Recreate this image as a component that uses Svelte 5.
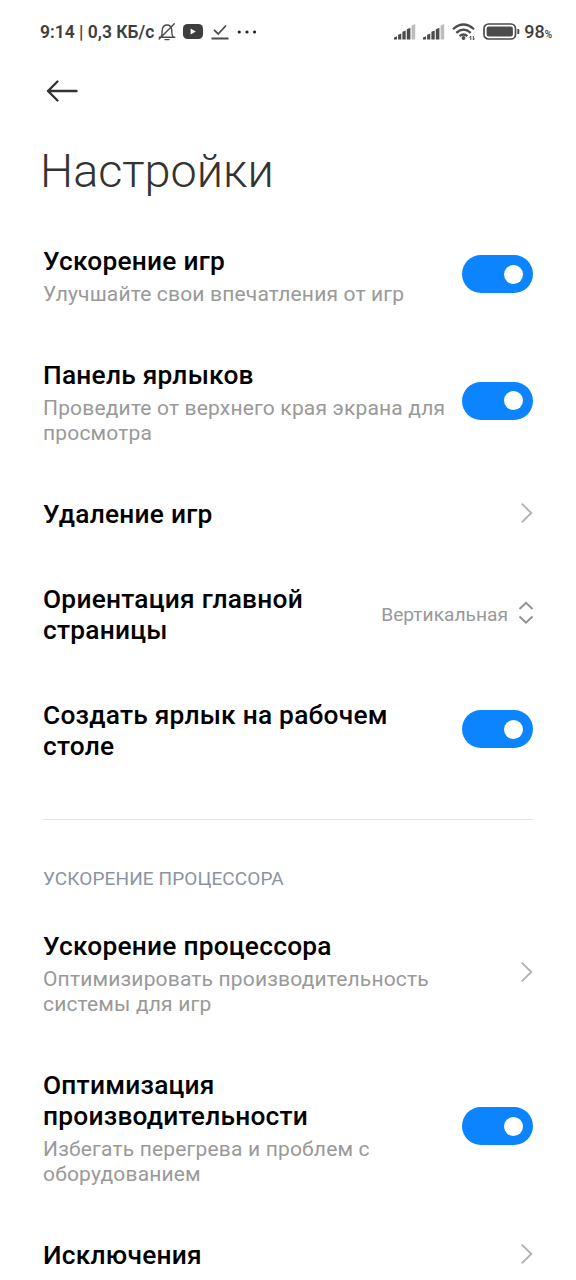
<script lang="ts">
	type Item = {
		title: string;
		summary?: string;
		kind: 'switch' | 'link' | 'select';
		value?: string;
		on?: boolean;
	};

	let general: Item[] = $state([
		{
			title: 'Ускорение игр',
			summary: 'Улучшайте свои впечатления от игр',
			kind: 'switch',
			on: true
		},
		{
			title: 'Панель ярлыков',
			summary: 'Проведите от верхнего края экрана для просмотра',
			kind: 'switch',
			on: true
		},
		{ title: 'Удаление игр', kind: 'link' },
		{ title: 'Ориентация главной страницы', kind: 'select', value: 'Вертикальная' },
		{ title: 'Создать ярлык на рабочем столе', kind: 'switch', on: true }
	]);

	let processor: Item[] = $state([
		{
			title: 'Ускорение процессора',
			summary: 'Оптимизировать производительность системы для игр',
			kind: 'link'
		},
		{
			title: 'Оптимизация производительности',
			summary: 'Избегать перегрева и проблем с оборудованием',
			kind: 'switch',
			on: true
		},
		{ title: 'Исключения', kind: 'link' }
	]);
</script>

{#snippet signal()}
	<svg class="signal" width="22" height="16" viewBox="0 0 22 16">
		<path
			d="M0 15.5v-2l3-1.3v3.3zM4.1 15.5v-4.8l3.2-1.2v6zM8.4 15.5V7.8l3.3-1.2v8.9zM12.8 15.5V5.2l3.6-1.5v11.8z"
			fill="#4b4b4b"
		/>
		<path d="M17.6 15.5V1.4L21.2 0v15.5z" fill="#bdbdbd" />
	</svg>
{/snippet}

{#snippet row(item: Item)}
	<li class="row">
		<div class="text">
			<div class="title">{item.title}</div>
			{#if item.summary}
				<div class="summary">{item.summary}</div>
			{/if}
		</div>
		{#if item.kind === 'switch'}
			<button
				class="switch"
				class:on={item.on}
				role="switch"
				aria-checked={item.on}
				aria-label={item.title}
				onclick={() => (item.on = !item.on)}
			></button>
		{:else if item.kind === 'select'}
			<span class="value">{item.value}</span>
			<svg class="updown" width="16" height="24" viewBox="0 0 16 24">
				<path d="M1.5 8 8 1.8 14.5 8M1.5 15.5 8 21.7l6.5-6.2" />
			</svg>
		{:else}
			<svg class="chevron" width="13" height="22" viewBox="0 0 13 22">
				<path d="M1.8 1.7 11.3 11l-9.5 9.3" />
			</svg>
		{/if}
	</li>
{/snippet}

<div class="screen">
	<div class="status">
		<span class="clock">9:14 | 0,3 КБ/с</span>
		<svg class="bell" width="18" height="18" viewBox="0 0 18 18">
			<path
				d="M1.2 14.2h15.6M3 13.8C4.4 12.2 4 10 4.2 7.2 4.5 4 6.4 2 9 2s4.5 2 4.8 5.2c.2 2.8-.2 5 1.2 6.6M7 16.6h4M16.3.8 1.2 16"
			/>
		</svg>
		<svg class="video" width="20" height="15" viewBox="0 0 20 15">
			<rect width="20" height="15" rx="4.5" fill="#3e3e3e" />
			<path d="M7.6 4.5v6l5.2-3z" fill="#fff" />
		</svg>
		<svg class="done" width="18" height="16" viewBox="0 0 18 16">
			<path d="M3 5.8 7.2 10 15 1.5M.5 14.5h17" />
		</svg>
		<svg class="dots" width="20" height="4" viewBox="0 0 20 4">
			<circle cx="2.2" cy="2" r="1.6" />
			<circle cx="10" cy="2" r="1.6" />
			<circle cx="17.6" cy="2" r="1.6" />
		</svg>
		<div class="right">
			{@render signal()}
			{@render signal()}
			<svg class="wifi" width="24" height="18" viewBox="0 0 24 18">
				<path d="M1 6.2Q11.5-3.2 22 6.2M4.3 9.8q7.2-6.2 14.4 0M7.6 13.1q3.9-3.2 7.8 0" />
				<circle cx="11.5" cy="15" r="1.9" />
				<path class="traffic" d="M18.8 17v-4l-1.3 1.5M21.3 13v4l1.3-1.5" />
			</svg>
			<svg class="battery" width="37" height="17" viewBox="0 0 37 17">
				<rect x="1" y="1" width="31.5" height="15" rx="4.5" fill="none" stroke="#4b4b4b" stroke-width="1.7" />
				<rect x="3.6" y="3.6" width="26.3" height="9.8" rx="2.2" fill="#4b4b4b" />
				<path d="M34.3 6h1.2q.8 0 .8.8v3.4q0 .8-.8.8h-1.2z" fill="#4b4b4b" />
			</svg>
			<span class="percent">98<small>%</small></span>
		</div>
	</div>

	<button class="back" aria-label="Назад">
		<svg width="32" height="24" viewBox="0 0 32 24">
			<path d="M30.5 12H2M11.5 2.5 2 12l9.5 9.5" />
		</svg>
	</button>

	<h1>Настройки</h1>

	<ul>
		{#each general as item (item.title)}
			{@render row(item)}
		{/each}
	</ul>

	<hr />
	<h2>УСКОРЕНИЕ ПРОЦЕССОРА</h2>

	<ul>
		{#each processor as item (item.title)}
			{@render row(item)}
		{/each}
	</ul>
</div>

<style>
	:global(body) {
		background: #fff;
		overflow: hidden;
	}

	.screen {
		box-sizing: border-box;
		width: 576px;
		height: 1280px;
		overflow: hidden;
		background: #fff;
		font-family: Roboto, 'Noto Sans', sans-serif;
		color: #000;
	}

	svg {
		display: block;
		flex: none;
	}

	.status {
		display: flex;
		align-items: center;
		height: 63px;
		padding: 0 24px 0 40px;
		color: #3e3e3e;
	}

	.clock {
		width: 114px;
		font-size: 17.5px;
		font-weight: 600;
		white-space: nowrap;
	}

	.bell {
		margin-left: 4px;
		fill: none;
		stroke: #4b4b4b;
		stroke-width: 1.4;
		stroke-linecap: round;
	}

	.video {
		margin-left: 7px;
	}

	.done {
		margin-left: 8px;
		fill: none;
		stroke: #4b4b4b;
		stroke-width: 1.8;
	}

	.dots {
		margin-left: 8px;
		fill: #222;
	}

	.right {
		display: flex;
		align-items: center;
		margin-left: auto;
	}

	.signal {
		margin-right: 7px;
	}

	.wifi {
		margin: 1px 7px 0 0;
		fill: none;
		stroke: #4b4b4b;
		stroke-width: 2.2;
	}

	.wifi circle {
		fill: #4b4b4b;
		stroke: none;
	}

	.wifi .traffic {
		stroke-width: 1;
	}

	.percent {
		margin-left: 4px;
		font-size: 18px;
		font-weight: 500;
	}

	.percent small {
		font-size: 10px;
	}

	.back {
		display: block;
		margin: 16px 0 0 46px;
		padding: 0;
		border: 0;
		background: none;
	}

	.back path {
		fill: none;
		stroke: #333;
		stroke-width: 2.4;
		stroke-linecap: round;
		stroke-linejoin: round;
	}

	h1 {
		margin: 38px 0 0 40px;
		font-size: 46.8px;
		font-weight: 300;
		line-height: 60px;
		color: #333;
	}

	ul {
		margin: 0;
		padding: 0 43px;
		list-style: none;
	}

	h1 + ul {
		margin-top: 18px;
	}

	.row {
		display: flex;
		align-items: center;
		padding: 27px 0;
	}

	.text {
		flex: 1;
		min-width: 0;
	}

	.title {
		font-size: 26.3px;
		font-weight: 500;
		line-height: 31px;
		letter-spacing: 0.24px;
	}

	.summary {
		margin: 5px 0 -1px;
		font-size: 21px;
		line-height: 25px;
		letter-spacing: 0.17px;
		color: #999;
	}

	.switch {
		flex: none;
		display: flex;
		align-items: center;
		width: 71px;
		height: 38px;
		margin: -4px 0 0 14px;
		padding: 0 10px;
		border: 0;
		border-radius: 19px;
		background: #e2e2e2;
	}

	.switch::before {
		content: '';
		width: 19px;
		height: 19px;
		border-radius: 50%;
		background: #fff;
	}

	.switch.on {
		justify-content: flex-end;
		background: #0d84ff;
	}

	.value {
		margin: -2px 10px 0 0;
		font-size: 19.2px;
		color: #999;
	}

	.updown,
	.chevron {
		fill: none;
		stroke: #929292;
		stroke-width: 2;
	}

	.updown {
		margin: -4px -1px 0 0;
	}

	.chevron {
		margin: -3px 0 0 20px;
		stroke: #b0b0b0;
		stroke-width: 1.8;
	}

	hr {
		height: 1px;
		margin: 30px 43px 0;
		border: 0;
		background: #e2e2e2;
	}

	h2 {
		margin: 46px 43px 12px;
		font-size: 19px;
		font-weight: 400;
		line-height: 26px;
		letter-spacing: 0.1px;
		color: #8c93a0;
	}
</style>
